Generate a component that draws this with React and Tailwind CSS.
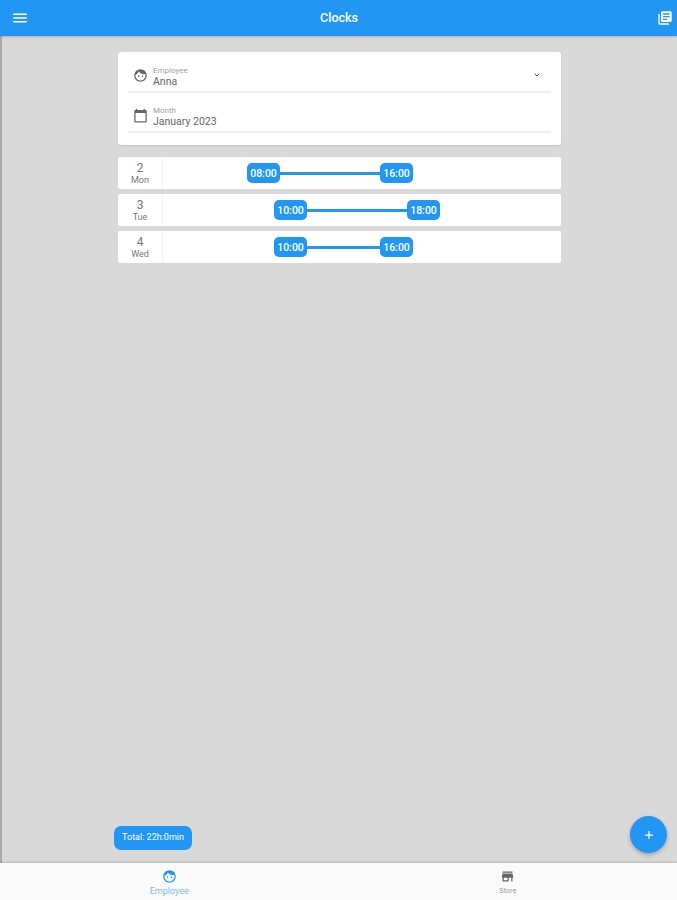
import React from 'react';
import { Plus, ChevronDown } from 'lucide-react';

const MENU = 'M3 18h18v-2H3v2zm0-5h18v-2H3v2zm0-7v2h18V6H3z';
const FACE = 'M9 11.75c-.69 0-1.25.56-1.25 1.25s.56 1.25 1.25 1.25 1.25-.56 1.25-1.25-.56-1.25-1.25-1.25zm6 0c-.69 0-1.25.56-1.25 1.25s.56 1.25 1.25 1.25 1.25-.56 1.25-1.25-.56-1.25-1.25-1.25zM12 2C6.48 2 2 6.48 2 12s4.48 10 10 10 10-4.48 10-10S17.52 2 12 2zm0 18c-4.41 0-8-3.59-8-8 0-.29.02-.58.05-.86 2.36-1.05 4.23-2.98 5.21-5.37C11.07 8.33 14.05 10 17.42 10c.78 0 1.53-.09 2.25-.26.21.71.33 1.47.33 2.26 0 4.41-3.59 8-8 8z';
const CALENDAR = 'M20 3h-1V1h-2v2H7V1H5v2H4c-1.1 0-2 .9-2 2v16c0 1.1.9 2 2 2h16c1.1 0 2-.9 2-2V5c0-1.1-.9-2-2-2zm0 18H4V8h16v13z';
const STORE = 'M20 4H4v2h16V4zm1 10v-2l-1-5H4l-1 5v2h1v6h10v-6h4v6h2v-6h1zm-9 4H6v-4h6v4z';
const BOOKS = 'M4 6H2v14c0 1.1.9 2 2 2h14v-2H4V6zm16-4H8c-1.1 0-2 .9-2 2v12c0 1.1.9 2 2 2h12c1.1 0 2-.9 2-2V4c0-1.1-.9-2-2-2zm-1 9H9V9h10v2zm-4 4H9v-2h6v2zm4-8H9V5h10v2z';

const MaterialIcon = ({ d, className }) => (
  <svg viewBox="0 0 24 24" className={className} fill="currentColor">
    <path d={d} />
  </svg>
);

const days = [
  { num: 2, name: 'Mon', start: '08:00', end: '16:00', offset: 'ml-[84px]', line: 'w-[100px]' },
  { num: 3, name: 'Tue', start: '10:00', end: '18:00', offset: 'ml-[111px]', line: 'w-[100px]' },
  { num: 4, name: 'Wed', start: '10:00', end: '16:00', offset: 'ml-[111px]', line: 'w-[73px]' },
];

const Chip = ({ children }) => (
  <span className="flex h-[20px] w-[33px] shrink-0 items-center justify-center rounded-[5px] bg-[#2196f3] pt-[1px] text-[10.5px] font-medium text-white">
    {children}
  </span>
);

const Field = ({ icon, label, value, trailing }) => (
  <div className="flex h-[40px] flex-col">
    <div className="flex flex-1 items-center pt-[6px]">
      <MaterialIcon d={icon} className="ml-[5px] h-[15px] w-[15px] text-[#666666]" />
      <div className="ml-[5px] mt-[4px] flex flex-col">
        <span className="text-[8px] leading-[10px] text-[#a0a0a0]">{label}</span>
        <span className="text-[10.5px] leading-[12px] text-[#666666]">{value}</span>
      </div>
      {trailing}
    </div>
    <div className="h-[2px] bg-[#f0f0f0]" />
  </div>
);

const App = () => {
  return (
    <div className="relative flex h-[900px] w-[677px] flex-col overflow-hidden bg-[#d9d9d9] font-['Roboto',sans-serif]">
      <header className="z-10 flex h-[36px] shrink-0 items-center justify-between bg-[#2196f3] pl-[11px] pr-[4px] shadow-[0_1px_2px_rgba(0,0,0,0.2)]">
        <div className="w-[24px]">
          <MaterialIcon d={MENU} className="h-[18px] w-[18px] text-white" />
        </div>
        <h1 className="-ml-[14px] text-[12.5px] font-medium text-white">Clocks</h1>
        <MaterialIcon d={BOOKS} className="h-[16px] w-[16px] text-white" />
      </header>

      <main className="flex flex-1 flex-col border-l-2 border-[#aaaaaa] pl-[116px] pt-[16px]">
        <section className="h-[93px] w-[443px] rounded-[3px] bg-white px-[10px] pt-[1px] shadow-[0_1px_2px_rgba(0,0,0,0.1)]">
          <div className="flex flex-col">
            <Field
              icon={FACE}
              label="Employee"
              value="Anna"
              trailing={<ChevronDown className="ml-auto mr-[10px] h-[8px] w-[8px] text-[#555555]" strokeWidth={3} />}
            />
            <Field icon={CALENDAR} label="Month" value="January 2023" />
          </div>
        </section>

        <ul className="mt-[12px] flex w-[443px] flex-col gap-[5px]">
          {days.map((day) => (
            <li key={day.num} className="flex h-[32px] items-stretch rounded-[2px] bg-white">
              <div className="flex w-[45px] shrink-0 flex-col items-center justify-center border-r border-[#f3f3f3] pt-[1px]">
                <span className="text-[12px] leading-[13px] text-[#777777]">{day.num}</span>
                <span className="text-[9px] leading-[11px] text-[#777777]">{day.name}</span>
              </div>
              <div className={`flex items-center ${day.offset}`}>
                <Chip>{day.start}</Chip>
                <div className={`h-[3px] bg-[#2196f3] ${day.line}`} />
                <Chip>{day.end}</Chip>
              </div>
            </li>
          ))}
        </ul>
      </main>

      <div className="absolute left-[114px] top-[826px] flex h-[24px] w-[78px] items-center justify-center rounded-[7px] bg-[#2196f3] text-[9px] text-white">
        Total: 22h:0min
      </div>
      <button className="absolute left-[630px] top-[816px] flex h-[37px] w-[37px] items-center justify-center rounded-full bg-[#2196f3] shadow-[0_2px_4px_rgba(0,0,0,0.25)]">
        <Plus className="h-[12px] w-[12px] text-white" strokeWidth={2.5} />
      </button>

      <nav className="flex h-[37px] shrink-0 bg-[#fafafa] shadow-[0_-1px_2px_rgba(0,0,0,0.15)]">
        <div className="flex flex-1 flex-col items-center pt-[6px]">
          <MaterialIcon d={FACE} className="h-[15px] w-[15px] text-[#2196f3]" />
          <span className="mt-[2px] text-[9px] leading-[10px] text-[#7fb8ee]">Employee</span>
        </div>
        <div className="flex flex-1 flex-col items-center pt-[6px]">
          <MaterialIcon d={STORE} className="h-[15px] w-[15px] text-[#666666]" />
          <span className="mt-[2px] text-[7.5px] leading-[10px] text-[#a0a0a0]">Store</span>
        </div>
      </nav>
    </div>
  );
};

export default App;
